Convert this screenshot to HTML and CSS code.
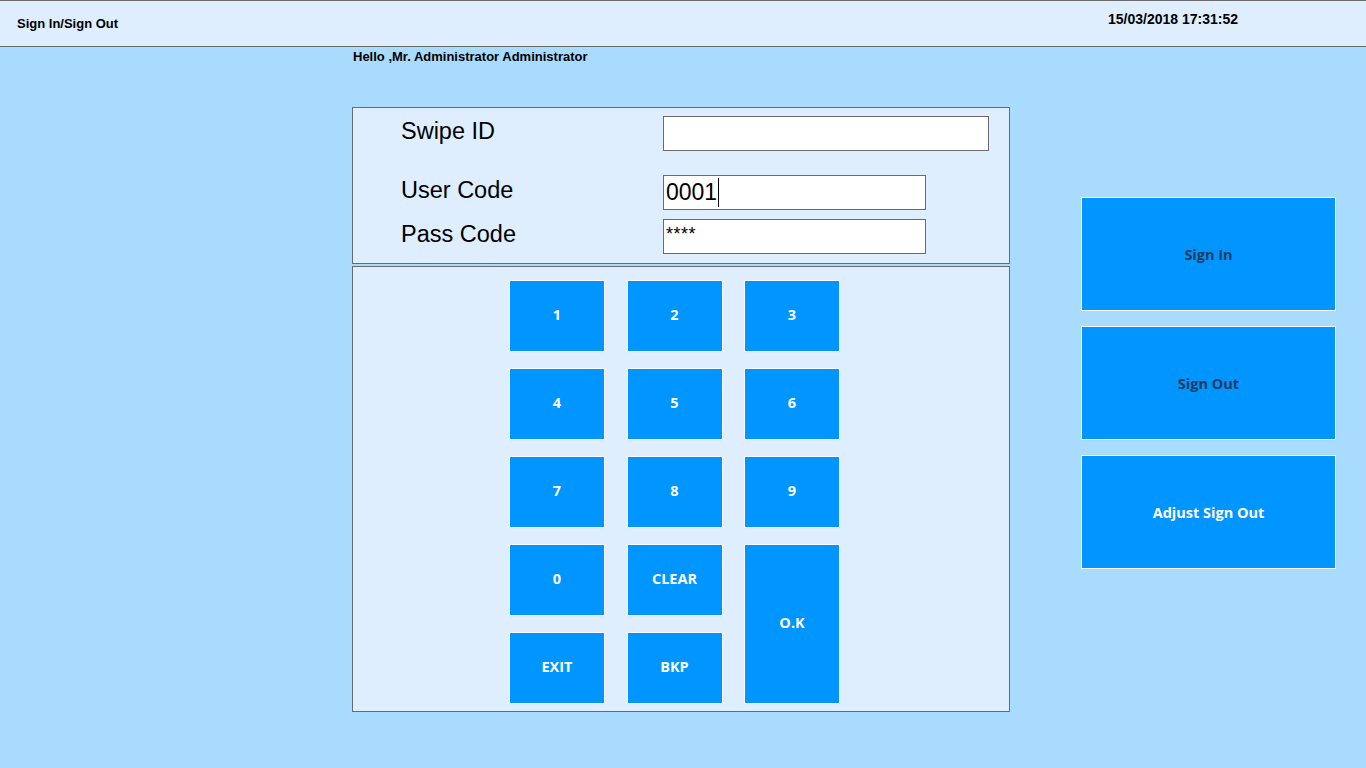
FILE: index.html
```html
<!DOCTYPE html>
<html>
<head>
<meta charset="utf-8">
<title>Sign In/Sign Out</title>
<link rel="stylesheet" href="styles.css">
</head>
<body>
<header class="topbar">
  <div class="title">Sign In/Sign Out</div>
  <div class="clock">15/03/2018 17:31:52</div>
</header>
<div class="content">
  <div class="left">
    <div class="hello">Hello ,Mr. Administrator Administrator</div>
    <div class="panel fields">
      <div class="row row-swipe">
        <div class="label">Swipe ID</div>
        <div class="input wide"></div>
      </div>
      <div class="row row-user">
        <div class="label">User Code</div>
        <div class="input"><span class="val">0001</span><span class="caret"></span></div>
      </div>
      <div class="row row-pass">
        <div class="label">Pass Code</div>
        <div class="input pass">****</div>
      </div>
    </div>
    <div class="panel keypanel">
      <div class="keypad">
        <div class="key">1</div>
        <div class="key">2</div>
        <div class="key">3</div>
        <div class="key">4</div>
        <div class="key">5</div>
        <div class="key">6</div>
        <div class="key">7</div>
        <div class="key">8</div>
        <div class="key">9</div>
        <div class="key">0</div>
        <div class="key">CLEAR</div>
        <div class="key ok">O.K</div>
        <div class="key">EXIT</div>
        <div class="key">BKP</div>
      </div>
    </div>
  </div>
  <div class="right">
    <div class="action dark">Sign In</div>
    <div class="action dark">Sign Out</div>
    <div class="action">Adjust Sign Out</div>
  </div>
</div>
</body>
</html>
```
FILE: styles.css
```css
html, body {
  margin: 0;
  padding: 0;
}
body {
  width: 1366px;
  height: 768px;
  overflow: hidden;
  background: #a9dbff;
  font-family: "Liberation Sans", Arial, sans-serif;
  color: #000;
}
.topbar {
  height: 45px;
  border-top: 1px solid #6b6b6b;
  border-bottom: 1px solid #6b6b6b;
  background: #deeeff;
  display: flex;
}
.title {
  font-weight: bold;
  font-size: 13px;
  padding-left: 17px;
  padding-top: 15px;
}
.clock {
  font-weight: bold;
  font-size: 14px;
  margin-left: auto;
  margin-right: 128px;
  padding-top: 10px;
}
.content {
  display: flex;
  padding-left: 352px;
}
.left {
  width: 658px;
  display: flex;
  flex-direction: column;
}
.hello {
  font-weight: bold;
  font-size: 13px;
  height: 16px;
  line-height: 16px;
  padding-top: 2px;
  padding-left: 1px;
  margin-bottom: 42px;
}
.panel {
  border: 1px solid #6b6b6b;
  background: #deeeff;
}
.fields {
  padding-top: 8px;
  box-sizing: border-box;
  height: 157px;
}
.row {
  display: flex;
  align-items: center;
}
.row-user {
  margin-top: 24px;
}
.row-pass {
  margin-top: 9px;
}
.label {
  width: 310px;
  padding-left: 48px;
  font-size: 23.5px;
  box-sizing: border-box;
  margin-top: -4px;
}
.input {
  width: 263px;
  height: 35px;
  box-sizing: border-box;
  border: 1px solid #6b6b6b;
  background: #fff;
  display: flex;
  align-items: center;
  padding-left: 2px;
  font-size: 23px;
}
.input.wide {
  width: 326px;
}
.caret {
  display: inline-block;
  width: 1px;
  height: 29px;
  background: #000;
  margin-left: 1px;
}
.input.pass {
  align-items: flex-start;
  font-size: 18px;
  padding-top: 4px;
  letter-spacing: 0.5px;
}
.keypanel {
  margin-top: 2px;
  height: 446px;
  box-sizing: border-box;
  padding-top: 13px;
  padding-left: 156px;
}
.keypad {
  display: grid;
  grid-template-columns: 96px 96px 96px;
  grid-template-rows: repeat(5, 72px);
  column-gap: 21.5px;
  row-gap: 16px;
}
.key, .action {
  background: #0095ff;
  border: 1px solid #ffffff;
  box-sizing: border-box;
  display: flex;
  align-items: center;
  justify-content: center;
  color: #ffffff;
  font-family: "Open Sans", "DejaVu Sans", sans-serif;
  font-weight: 700;
  font-size: 14.5px;
}
.key {
  padding-bottom: 3px;
}
.key.ok {
  grid-column: 3;
  grid-row: 4 / span 2;
}
.right {
  margin-left: 71px;
  width: 255px;
  padding-top: 150px;
  display: flex;
  flex-direction: column;
  gap: 15px;
}
.action {
  height: 114px;
}
.action.dark {
  color: #163d63;
}
```
